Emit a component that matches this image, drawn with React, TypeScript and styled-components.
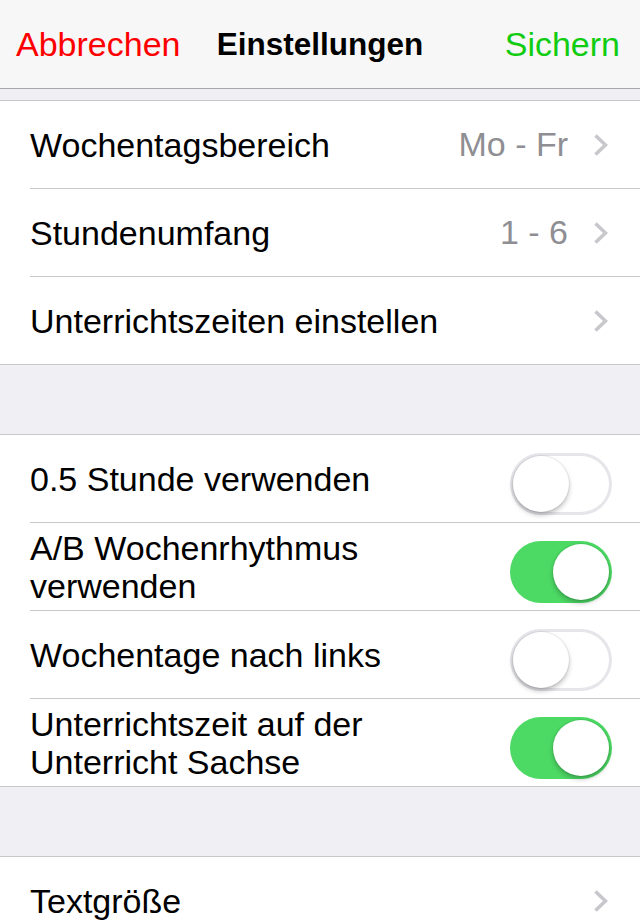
import React from 'react';
import styled, { createGlobalStyle } from 'styled-components';

const GlobalStyle = createGlobalStyle`
  html, body {
    margin: 0;
    padding: 0;
    background: #efeff4;
  }
  body {
    font-family: 'Liberation Sans', Arial, sans-serif;
    -webkit-font-smoothing: antialiased;
  }
`;

const SPage = styled.div`
  width: 640px;
  min-height: 920px;
  background: #efeff4;
  overflow: hidden;
`;

const SNavBar = styled.div`
  height: 88px;
  display: flex;
  align-items: center;
  justify-content: space-between;
  padding: 0 20px 0 16px;
  background: #f7f7f7;
  border-bottom: 1px solid #a8a8ab;
  position: relative;
`;

const SNavButton = styled.span<{ $color: string }>`
  font-size: 34px;
  color: ${({ $color }) => $color};
`;

const SNavTitle = styled.span`
  position: absolute;
  left: 0;
  right: 0;
  text-align: center;
  font-size: 31.5px;
  font-weight: bold;
  color: #000;
  pointer-events: none;
`;

const SGap = styled.div<{ $height: number }>`
  height: ${({ $height }) => $height}px;
`;

const SSection = styled.div`
  background: #fff;
  border-top: 1px solid #c8c7cc;
  border-bottom: 1px solid #c8c7cc;
`;

const SRow = styled.div`
  height: 87px;
  margin-left: 30px;
  padding-right: 32px;
  display: flex;
  align-items: center;
  border-bottom: 1px solid #c8c7cc;

  &:last-child {
    border-bottom: none;
  }
`;

const SToggleRow = styled(SRow)`
  padding-right: 28px;
`;

const SLabel = styled.div`
  flex: 1;
  font-size: 34px;
  line-height: 38px;
  color: #000;
`;

const SValue = styled.span`
  font-size: 34px;
  color: #8e8e93;
  margin-right: 25px;
`;

const SChevron = styled.svg`
  width: 15px;
  height: 24px;
  flex-shrink: 0;
`;

const SSwitch = styled.div<{ $on: boolean }>`
  position: relative;
  width: 102px;
  height: 62px;
  margin-top: 10px;
  border-radius: 31px;
  flex-shrink: 0;
  background: ${({ $on }) => ($on ? '#4cd964' : '#fff')};
  box-shadow: ${({ $on }) => ($on ? 'none' : 'inset 0 0 0 3px #e5e5ea')};
`;

const SKnob = styled.div<{ $on: boolean }>`
  position: absolute;
  top: 3px;
  left: ${({ $on }) => ($on ? '43px' : '3px')};
  width: 56px;
  height: 56px;
  border-radius: 50%;
  background: #fff;
  box-shadow: 0 3px 5px rgba(0, 0, 0, 0.25), 0 0 0 1px rgba(0, 0, 0, 0.06);
`;

const Chevron = () => (
  <SChevron viewBox="0 0 15 24">
    <polyline points="2.5,2.5 12.5,12 2.5,21.5" fill="none" stroke="#c7c7cc" strokeWidth="3.6" />
  </SChevron>
);

interface ILinkRowProps {
  label: string;
  value?: string;
}

const LinkRow = ({ label, value }: ILinkRowProps) => (
  <SRow>
    <SLabel>{label}</SLabel>
    {value && <SValue>{value}</SValue>}
    <Chevron />
  </SRow>
);

interface ISwitchRowProps {
  label: React.ReactNode;
  on: boolean;
}

const SwitchRow = ({ label, on }: ISwitchRowProps) => (
  <SToggleRow>
    <SLabel>{label}</SLabel>
    <SSwitch $on={on}>
      <SKnob $on={on} />
    </SSwitch>
  </SToggleRow>
);

const App = () => (
  <SPage>
    <GlobalStyle />
    <SNavBar>
      <SNavButton $color="#ff0000">{'Abbrechen'}</SNavButton>
      <SNavTitle>{'Einstellungen'}</SNavTitle>
      <SNavButton $color="#11cc11">{'Sichern'}</SNavButton>
    </SNavBar>
    <SGap $height={11} />
    <SSection>
      <LinkRow label="Wochentagsbereich" value="Mo - Fr" />
      <LinkRow label="Stundenumfang" value="1 - 6" />
      <LinkRow label="Unterrichtszeiten einstellen" />
    </SSection>
    <SGap $height={69} />
    <SSection>
      <SwitchRow label="0.5 Stunde verwenden" on={false} />
      <SwitchRow
        label={
          <>
            {'A/B Wochenrhythmus'}
            <br />
            {'verwenden'}
          </>
        }
        on
      />
      <SwitchRow label="Wochentage nach links" on={false} />
      <SwitchRow
        label={
          <>
            {'Unterrichtszeit auf der'}
            <br />
            {'Unterricht Sachse'}
          </>
        }
        on
      />
    </SSection>
    <SGap $height={69} />
    <SSection>
      <LinkRow label="Textgröße" />
    </SSection>
  </SPage>
);

export default App;
